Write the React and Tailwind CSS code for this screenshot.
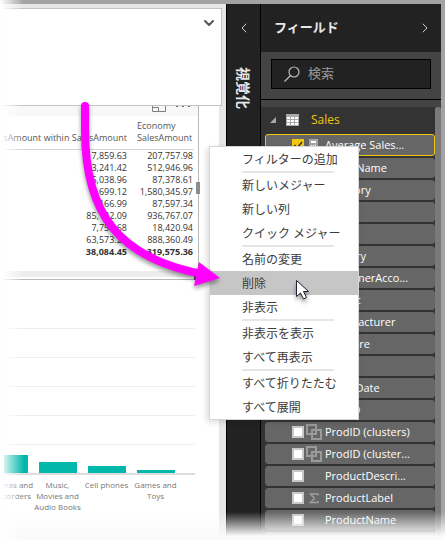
import React from "react";
import { ChevronDown, ChevronLeft, ChevronRight } from "lucide-react";

const tableRows = [
  ["17,859.63", "207,757.98"],
  ["13,241.42", "512,946.96"],
  ["5,038.96", "87,378.61"],
  ["4,699.12", "1,580,345.97"],
  ["166.99", "87,597.34"],
  ["85,182.09", "936,767.07"],
  ["7,756.68", "18,420.94"],
  ["63,573.27", "888,360.49"],
];

const bars = [
  { lines: ["Cameras and", "Camcorders"], height: 18 },
  { lines: ["Music,", "Movies and", "Audio Books"], height: 11 },
  { lines: ["Cell phones"], height: 7 },
  { lines: ["Games and", "Toys"], height: 3 },
];

const menuGroups = [
  ["フィルターの追加"],
  ["新しいメジャー", "新しい列", "クイック メジャー"],
  ["名前の変更", "削除", "非表示"],
  ["非表示を表示", "すべて再表示"],
  ["すべて折りたたむ", "すべて展開"],
];

const fields = [
  { name: "Average Sales...", icon: "calc", selected: true },
  { name: "BrandName" },
  { name: "Category" },
  { name: "Class" },
  { name: "Color" },
  { name: "Country" },
  { name: "CustomerAcco..." },
  { name: "Weight" },
  { name: "Manufacturer" },
  { name: "Measure" },
  { name: "Month" },
  { name: "OrderDate" },
  { name: "ProdID" },
  { name: "ProdID (clusters)", icon: "cluster" },
  { name: "ProdID (cluster...", icon: "cluster" },
  { name: "ProductDescri..." },
  { name: "ProductLabel", icon: "sum" },
  { name: "ProductName" },
];

function FieldIcon({ kind }) {
  if (kind === "calc")
    return (
      <svg className="h-4 w-4" viewBox="0 0 16 16">
        <path d="M3 2h9v13H3z" fill="#a6a6a6" />
        <path d="M5 4h5v2H5zM5 8h1v1H5zM7 8h1v1H7zM9 8h1v1H9zM5 11h1v1H5zM7 11h1v1H7zM9 11h1v1H9z" fill="#fff" />
      </svg>
    );
  if (kind === "cluster")
    return (
      <svg className="h-4 w-4" viewBox="0 0 16 16" fill="none" stroke="#9a9a9a" strokeWidth="2">
        <path d="M1 1h9v9H1zM6 6h9v9H6z" />
      </svg>
    );
  if (kind === "sum")
    return (
      <svg className="h-4 w-4" viewBox="0 0 16 16" fill="none" stroke="#a0a0a0" strokeWidth="1.4">
        <path d="M12 5.500V4H4.500l4 4.300-4 4.200H12V11" />
      </svg>
    );
  return <span className="h-4 w-4" />;
}

function TableVisual() {
  return (
    <section className="relative mr-5 h-[174px] border-r border-b border-[#b8b8b8] bg-white">
      <div className="flex h-[10px] items-start justify-end gap-2 overflow-hidden bg-[#f7f7f7] pr-[7px]">
        <svg className="h-[6px] w-4" viewBox="0 0 16 6" fill="none" stroke="#808080">
          <path d="M1.500 0v5.500h13V0M1.500 1.500h6v4" />
        </svg>
        <svg className="h-[3px] w-4" viewBox="0 0 16 3" fill="#666">
          <path d="M1 0h2v1H1zM7 0h2v1H7zM13 0h2v1h-2z" />
        </svg>
      </div>
      <div className="flex justify-end overflow-hidden pr-1">
        <table className="shrink-0 text-right text-[9px] whitespace-nowrap text-[#333]">
          <thead>
            <tr className="border-b border-[#d4d4d4] align-bottom leading-3 text-[#555]">
              <th className="w-[140px] pt-1 pr-px pb-[5px] font-normal">SalesAmount within SalesAmount</th>
              <th className="w-[66px] pt-1 pb-[5px] pl-[9px] text-left font-normal">
                Economy
                <br />
                SalesAmount
              </th>
            </tr>
          </thead>
          <tbody>
            {tableRows.map(([a, b], i) => (
              <tr key={i} className="h-3 leading-3">
                <td className="p-0 pr-px">{a}</td>
                <td className="p-0 pr-px">{b}</td>
              </tr>
            ))}
            <tr className="h-3 leading-3 font-bold">
              <td className="p-0 pr-px">38,084.45</td>
              <td className="p-0 pr-px">4,319,575.36</td>
            </tr>
          </tbody>
        </table>
      </div>
      <div className="absolute right-0 bottom-[2px] left-0 h-[6px] bg-[#ededed]" />
      <div className="absolute -right-[2px] bottom-[85px] h-3 w-1 bg-[#8c8c8c]" />
      <div className="absolute right-0 -bottom-px h-1 w-1 bg-[#555]" />
    </section>
  );
}

function ChartVisual() {
  return (
    <section className="mr-6 overflow-hidden pt-12">
      {[0, 1, 2, 3].map((i) => (
        <div key={i} className="h-[29px] border-t border-[#eeeeee]" />
      ))}
      <div className="flex h-[29px] items-end justify-end border-t border-[#eeeeee] pr-[15px]">
        {bars.map((b) => (
          <div key={b.lines[0]} className="flex w-[49px] shrink-0 justify-center">
            <div className="w-[38px] bg-[#01b8aa]" style={{ height: b.height }} />
          </div>
        ))}
      </div>
      <div className="h-[2px] bg-[#dddddd]" />
      <div className="flex justify-end pt-1 pr-[15px] text-[8px] leading-[11px] whitespace-nowrap text-[#777]">
        {bars.map((b) => (
          <div key={b.lines[0]} className="flex w-[49px] shrink-0 flex-col items-center">
            {b.lines.map((line) => (
              <span key={line}>{line}</span>
            ))}
          </div>
        ))}
      </div>
    </section>
  );
}

function ContextMenu() {
  return (
    <ul
      role="menu"
      className="absolute top-[146px] right-[86px] w-[150px] border border-[#d6d6d6] bg-white text-[12px] text-[#3c3c3c] shadow-[-2px_2px_6px_rgba(0,0,0,0.15)]"
    >
      {menuGroups.map((group, g) => (
        <React.Fragment key={g}>
          {g > 0 && <li role="separator" className="mr-6 ml-8 h-[2px] bg-[#e6e6e6]" />}
          {group.map((item) => (
            <li key={item} role="none">
              <button
                role="menuitem"
                className={
                  item === "削除"
                    ? "flex h-6 w-full items-center bg-[#c6c6c6] pt-[2px] pl-8 whitespace-nowrap"
                    : "flex h-6 w-full items-center pt-[2px] pl-8 whitespace-nowrap"
                }
              >
                {item}
              </button>
            </li>
          ))}
        </React.Fragment>
      ))}
    </ul>
  );
}

function FieldsPanel() {
  return (
    <aside className="flex w-[181px] shrink-0 flex-col border-l border-black bg-[#444]">
      <header className="flex h-12 shrink-0 items-center justify-between bg-[#222] pr-2 pl-[13px]">
        <h2 className="text-[13px] font-bold text-[#e8e8e8]">フィールド</h2>
        <button aria-label="expand">
          <ChevronRight className="h-4 w-4 text-[#ccc]" strokeWidth={1.5} />
        </button>
      </header>
      <div className="h-12 shrink-0 border-b border-black px-[10px] pt-[7px]">
        <label className="flex h-[30px] items-center gap-2 border border-black bg-[#222] pl-3">
          <svg className="h-4 w-4 shrink-0" viewBox="0 0 16 16" fill="none" stroke="#bbb" strokeWidth="1.2">
            <circle cx="10" cy="6" r="5" />
            <path d="M6.500 9.500L.5 15.500" />
          </svg>
          <input
            aria-label="検索"
            placeholder="検索"
            className="w-full min-w-0 bg-transparent text-[13px] text-white outline-none placeholder:text-[#999]"
          />
        </label>
      </div>
      <div className="mt-[7px] flex min-h-0 flex-1">
        <div className="min-w-0 flex-1 overflow-hidden">
          <div className="flex h-[25px] items-center bg-[#333] pl-[9px]">
            <svg className="h-[6px] w-[6px]" viewBox="0 0 6 6" fill="#aaa">
              <path d="M6 0v6H0z" />
            </svg>
            <svg className="ml-[10px] h-3 w-[13px]" viewBox="0 0 13 12">
              <path d="M0 0h13v12H0z" fill="#aaa" />
              <path d="M1 3h3v2H1zM5 3h3v2H5zM9 3h3v2H9zM1 6h3v2H1zM5 6h3v2H5zM9 6h3v2H9zM1 9h3v2H1zM5 9h3v2H5zM9 9h3v2H9z" fill="#fff" />
            </svg>
            <span className="ml-3 text-[12px] text-[#f2c80f]">Sales</span>
          </div>
          <ul className="flex flex-col gap-[2px] bg-[#333] pt-[2px] pl-1">
            {fields.map((f) => (
              <li
                key={f.name}
                className={
                  f.selected
                    ? "h-[22px] shrink-0 rounded-[3px] border border-[#f2c80f] bg-[#666]"
                    : "h-5 shrink-0 rounded-[3px] border border-[#666] bg-[#666]"
                }
              >
                <label className="flex h-full items-center pl-[26px] text-[11px] font-medium whitespace-nowrap text-white">
                  <input
                    type="checkbox"
                    defaultChecked={f.selected}
                    className="peer h-3 w-3 shrink-0 appearance-none border-2 border-[#c8c8c8] bg-white checked:border-[#f2c80f] checked:bg-[#f2c80f]"
                  />
                  <svg className="-ml-3 hidden h-3 w-3 peer-checked:block" viewBox="0 0 12 12" fill="none" stroke="#333" strokeWidth="1.5">
                    <path d="M2.500 6l2.500 3 5-6" />
                  </svg>
                  <span className="mr-[3px] ml-[2px] flex">
                    <FieldIcon kind={f.icon} />
                  </span>
                  {f.name}
                </label>
              </li>
            ))}
            <li className="h-5 shrink-0 rounded-[3px] bg-[#666]" />
          </ul>
        </div>
        <div className="w-[6px] rounded-t-[3px] bg-[#7a7a7a]" />
      </div>
    </aside>
  );
}

export default function App() {
  return (
    <div className="relative flex h-screen flex-col overflow-hidden bg-[#fafafa] pb-1 font-['Open_Sans','Noto_Sans_CJK_JP',sans-serif]">
      <div className="h-1 shrink-0 bg-[#a3a3a3]" />
      <div className="flex min-h-0 flex-1 pl-1">
        <main className="flex min-w-0 flex-1 flex-col bg-[#e6e6e6] pt-1">
          <div className="mr-1 flex h-[98px] shrink-0 justify-end border border-l-0 border-[#c3c3c3] bg-white pt-[6px] pr-1">
            <button aria-label="open" className="h-4 w-4">
              <ChevronDown className="h-4 w-4 text-[#555]" strokeWidth={3} />
            </button>
          </div>
          <div className="mr-[7px] min-h-0 flex-1 bg-white">
            <TableVisual />
            <ChartVisual />
          </div>
        </main>
        <nav className="flex w-[34px] shrink-0 flex-col items-center border-l border-black bg-[#222]">
          <button aria-label="collapse" className="mt-4 h-4 w-4">
            <ChevronLeft className="h-4 w-4 text-[#ccc]" strokeWidth={1.5} />
          </button>
          <h2 className="mt-[31px] text-[14px] font-bold text-[#e8e8e8] [text-orientation:sideways] [writing-mode:vertical-rl]">
            視覚化
          </h2>
        </nav>
        <FieldsPanel />
        <div className="w-1 shrink-0 bg-[#a3a3a3]" />
      </div>
      <div className="pointer-events-none absolute inset-x-0 bottom-1 h-6 bg-linear-to-t from-[#fafafa] to-transparent" />
      <div className="pointer-events-none absolute inset-y-0 left-0 w-6 bg-linear-to-r from-white to-transparent" />
      <ContextMenu />
      <svg
        className="pointer-events-none absolute top-0 right-0 h-[540px] w-[445px] drop-shadow-[0_3px_2px_rgba(0,0,0,0.4)]"
        viewBox="0 0 445 540"
      >
        <path d="M85 106V130C85 215 120 258 202 274" fill="none" stroke="#f0f" strokeWidth="8" strokeLinecap="round" />
        <path d="M199 262l21 16-26 8z" fill="#f0f" />
        <path d="M296.500 280.500v16l4-3.500 3 6 3-1.500-3-6h5z" fill="#fff" stroke="#223" />
      </svg>
    </div>
  );
}
